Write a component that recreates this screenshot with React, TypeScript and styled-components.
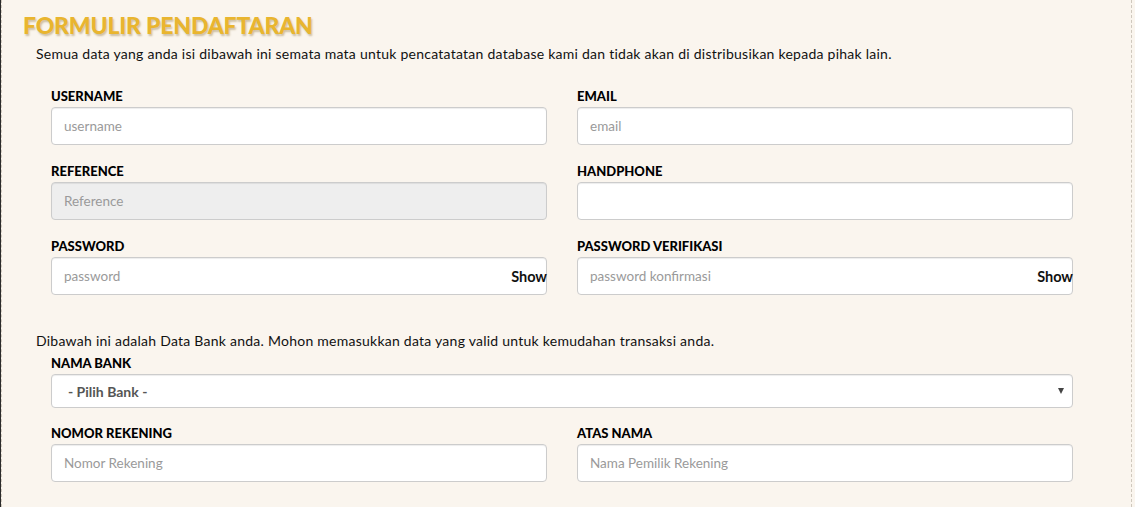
import React from 'react';
import styled, { createGlobalStyle } from 'styled-components';

const GlobalStyle = createGlobalStyle`
  html, body {
    margin: 0;
    padding: 0;
    background: #2b2b2b;
  }
  * {
    box-sizing: border-box;
  }
`;

type Field = {
  label: string;
  placeholder?: string;
  disabled?: boolean;
  toggle?: boolean;
};

const accountFields: Field[] = [
  { label: 'USERNAME', placeholder: 'username' },
  { label: 'EMAIL', placeholder: 'email' },
  { label: 'REFERENCE', placeholder: 'Reference', disabled: true },
  { label: 'HANDPHONE' },
  { label: 'PASSWORD', placeholder: 'password', toggle: true },
  { label: 'PASSWORD VERIFIKASI', placeholder: 'password konfirmasi', toggle: true },
];

function FormField({ field }: { field: Field }) {
  return (
    <Styled.Field>
      <Styled.Label>{field.label}</Styled.Label>
      <Styled.InputWrap>
        <Styled.Input placeholder={field.placeholder} disabled={field.disabled} />
        {field.toggle && <Styled.Toggle>Show</Styled.Toggle>}
      </Styled.InputWrap>
    </Styled.Field>
  );
}

function App() {
  return (
    <Styled.Page>
      <GlobalStyle />
      <Styled.Panel>
        <Styled.Title>FORMULIR PENDAFTARAN</Styled.Title>
        <Styled.Note>
          Semua data yang anda isi dibawah ini semata mata untuk pencatatatan database kami dan tidak akan di
          distribusikan kepada pihak lain.
        </Styled.Note>
        <Styled.Grid>
          {accountFields.map((f) => (
            <FormField key={f.label} field={f} />
          ))}
        </Styled.Grid>

        <Styled.Note $spaced>
          Dibawah ini adalah Data Bank anda. Mohon memasukkan data yang valid untuk kemudahan transaksi anda.
        </Styled.Note>
        <Styled.Grid $tight>
          <Styled.Field $wide>
            <Styled.Label>NAMA BANK</Styled.Label>
            <Styled.SelectBox>
              <span>- Pilih Bank -</span>
              <Styled.Caret />
            </Styled.SelectBox>
          </Styled.Field>
          <FormField field={{ label: 'NOMOR REKENING', placeholder: 'Nomor Rekening' }} />
          <FormField field={{ label: 'ATAS NAMA', placeholder: 'Nama Pemilik Rekening' }} />
        </Styled.Grid>
      </Styled.Panel>
    </Styled.Page>
  );
}
export default App;

const Styled = {
  Page: styled.div`
    display: flex;
    width: 1135px;
    height: 507px;
    overflow: hidden;
    font-family: Lato, 'Liberation Sans', sans-serif;
  `,
  Panel: styled.div`
    width: 1131px;
    flex: none;
    height: 100%;
    background: #faf5ee;
    border-left: 1px dashed #cfc8bd;
    border-right: 1px dashed #cfc8bd;
    margin-left: 1px;
    padding: 11px 0 0 21px;
    box-shadow: 6px 0 0 #faf5ee;
    margin-right: 6px;
  `,
  Title: styled.h1`
    margin: 0;
    font-size: 23px;
    line-height: 28px;
    font-weight: 900;
    color: #e9b52f;
    letter-spacing: -0.2px;
    text-shadow: 1px 2px 2px rgba(120, 90, 20, 0.35);
  `,
  Note: styled.p<{ $spaced?: boolean }>`
    margin: ${(p) => (p.$spaced ? '19px' : '6px')} 0 0 13px;
    font-size: 14px;
    line-height: 18px;
    letter-spacing: 0.25px;
    color: #111;
  `,
  Grid: styled.div<{ $tight?: boolean }>`
    display: grid;
    grid-template-columns: 496px 496px;
    column-gap: 30px;
    margin: 0 0 0 28px;
    padding-top: ${(p) => (p.$tight ? '5px' : '25px')};
  `,
  Field: styled.div<{ $wide?: boolean }>`
    grid-column: ${(p) => (p.$wide ? '1 / -1' : 'auto')};
    margin-bottom: ${(p) => (p.$wide ? '17px' : '18px')};
  `,
  Label: styled.div`
    font-size: 13px;
    line-height: 16px;
    font-weight: 900;
    color: #000;
    margin-bottom: 3px;
  `,
  InputWrap: styled.div`
    position: relative;
  `,
  Input: styled.input`
    display: block;
    width: 100%;
    height: 38px;
    padding: 0 12px;
    border: 1px solid #cccccc;
    border-radius: 4px;
    background: #fff;
    box-shadow: inset 0 1px 1px rgba(0, 0, 0, 0.075);
    font-family: Lato, 'Liberation Sans', sans-serif;
    font-size: 13.5px;
    color: #555;
    outline: none;
    &::placeholder {
      color: #9a9a9a;
    }
    &:disabled {
      background: #eeeeee;
    }
  `,
  Toggle: styled.span`
    position: absolute;
    right: 0;
    top: 50%;
    transform: translateY(-50%);
    font-size: 14.5px;
    font-weight: 700;
    color: #111;
    cursor: pointer;
  `,
  SelectBox: styled.div`
    display: flex;
    align-items: center;
    justify-content: space-between;
    height: 34px;
    padding: 0 8px 0 16px;
    border: 1px solid #cccccc;
    border-radius: 4px;
    background: #fff;
    box-shadow: inset 0 1px 1px rgba(0, 0, 0, 0.075);
    font-size: 14px;
    font-weight: 700;
    color: #555;
  `,
  Caret: styled.span`
    width: 0;
    height: 0;
    border-left: 3.5px solid transparent;
    border-right: 3.5px solid transparent;
    border-top: 6px solid #444;
  `,
};
